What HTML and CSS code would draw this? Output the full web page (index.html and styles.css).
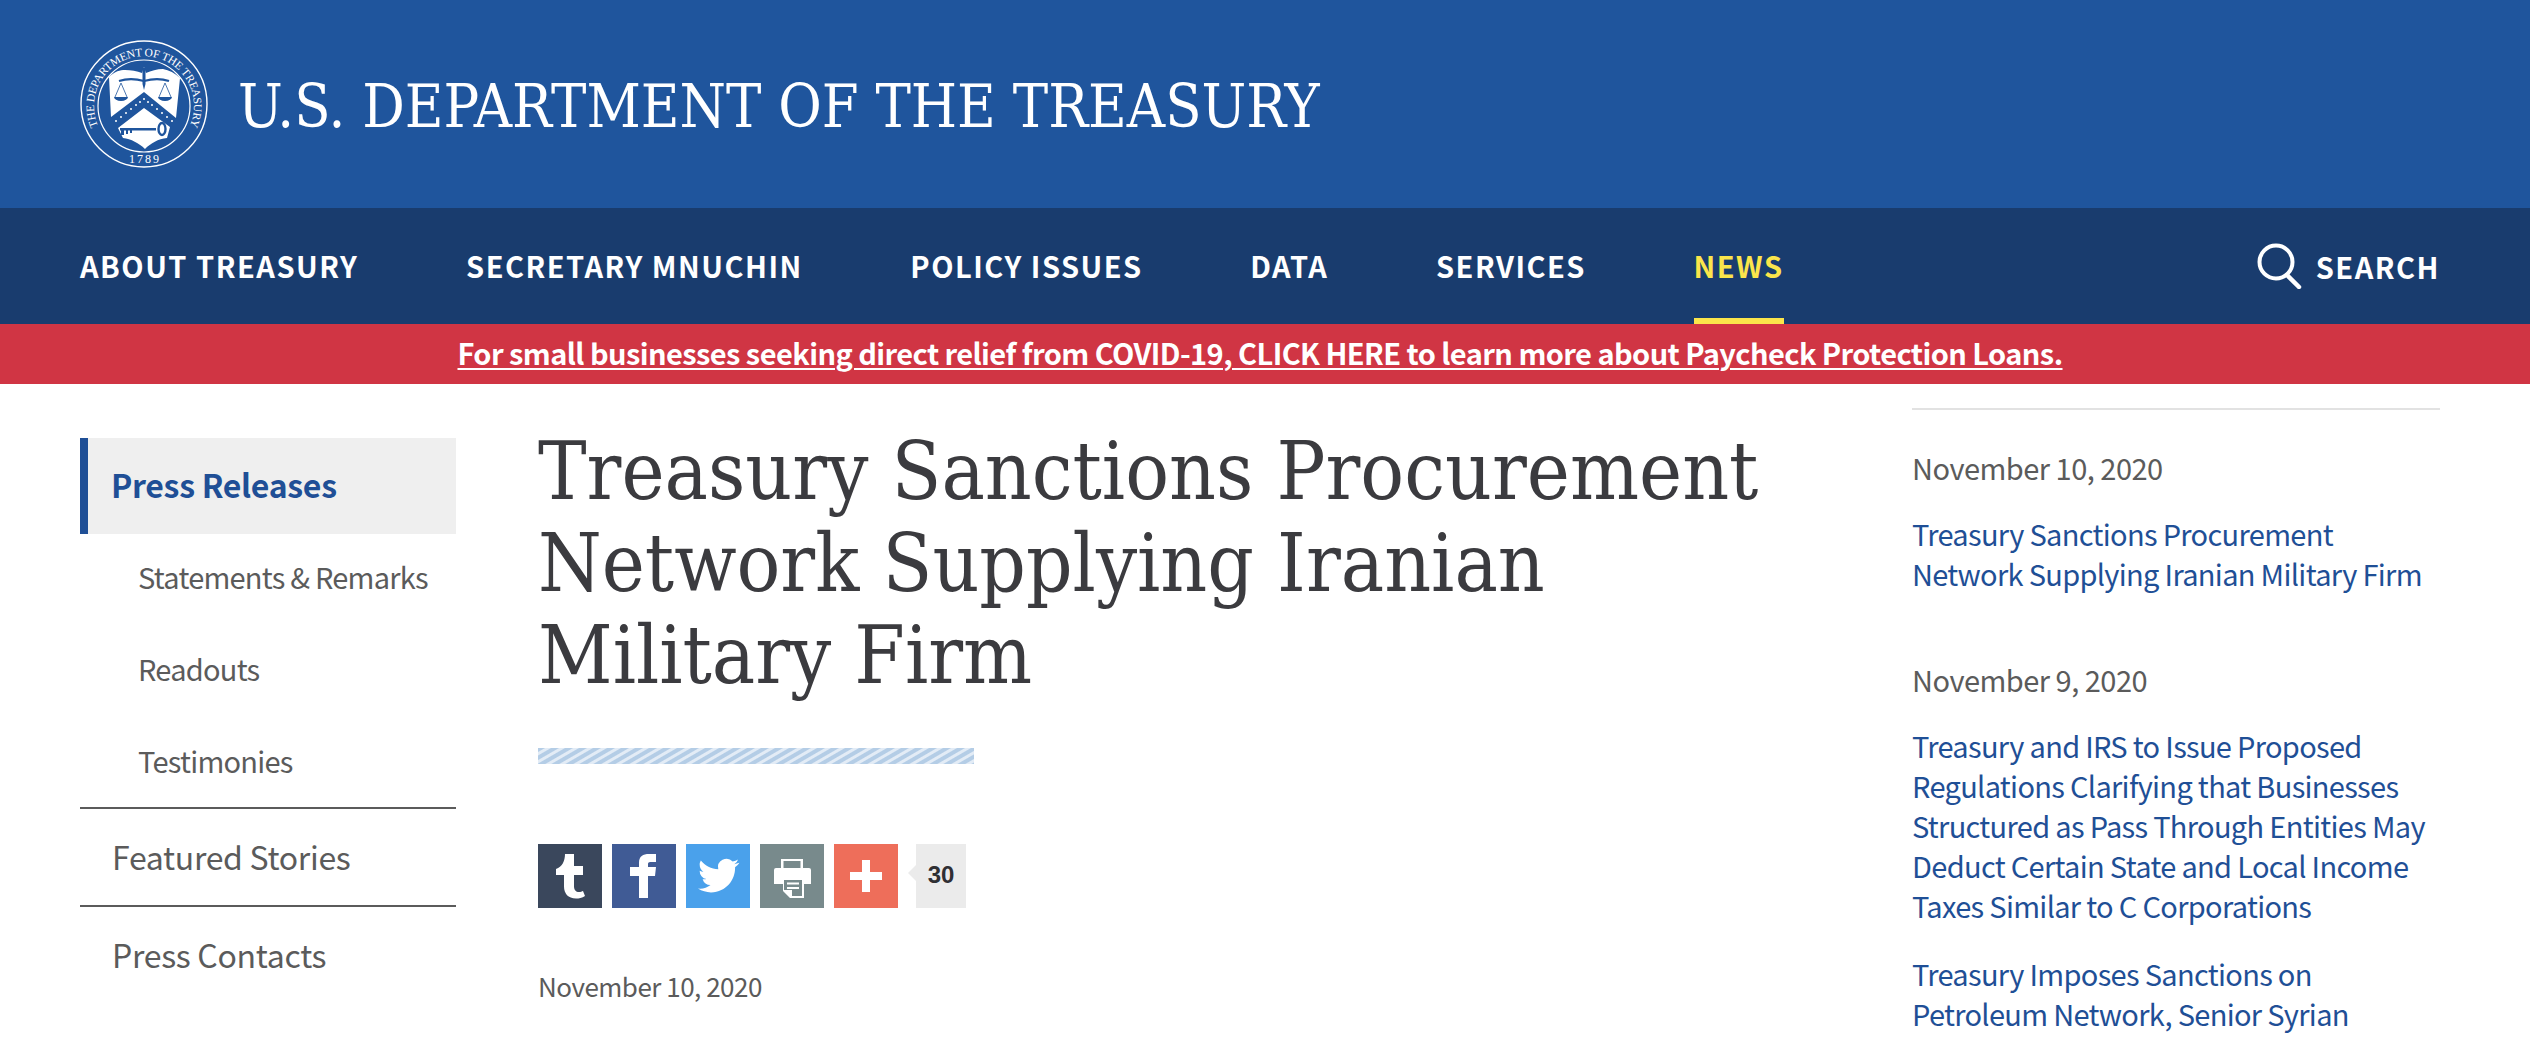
FILE: index.html
```html
<!DOCTYPE html>
<html lang="en">
<head>
<meta charset="utf-8">
<title>Treasury Sanctions Procurement Network Supplying Iranian Military Firm</title>
<link rel="stylesheet" href="styles.css">
</head>
<body>
<header class="masthead">
  <svg class="seal" viewBox="0 0 128 128" aria-hidden="true">
    <circle cx="64" cy="64" r="63" fill="none" stroke="#fff" stroke-width="1.400"/>
    <circle cx="64" cy="66" r="46" fill="none" stroke="#fff" stroke-width="1.200"/>
    <defs><path id="sealArc" d="M20 90 A50 50 0 1 1 108 90"/></defs>
    <text class="seal-ring"><textPath href="#sealArc" startOffset="50%" text-anchor="middle">THE DEPARTMENT OF THE TREASURY</textPath></text>
    <text class="seal-year" x="65" y="123" text-anchor="middle">1789</text>
    <path fill="#fff" d="M29 37 C35 31 40 30 45 30 C51 30 57 31 62 33 L64 27 L66 33 C71 31 77 29 83 29 C89 30 95 33 100 38 L96 78 L64 52 L31 77 Z"/>
    <path fill="#fff" d="M64 68 L90 87 L87 98 C78 99 71 103 65 109 C59 103 51 99 43 98 L38 88 Z"/>
    <path fill="none" stroke="#1f559d" stroke-width="2.200" d="M39 41 C48 38 57 39 64 41 C71 39 80 38 89 41"/>
    <path fill="#1f559d" d="M62.500 28 h3 v16 l-1.500 6 l-1.500 -6 z"/>
    <path fill="none" stroke="#1f559d" stroke-width="0.800" d="M41 43 L35 57 M41 43 L47 57 M85 43 L79 57 M85 43 L91 57"/>
    <path fill="#1f559d" d="M34 57 h14 a7 4 0 0 1 -14 0 Z M78 57 h14 a7 4 0 0 1 -14 0 Z"/>
    <path fill="#1f559d" d="M40 88 h36 v2.500 h-36 z M41 88 h3 v7 h-3 z M46 90 h2 v4 h-2 z M50 90 h2 v3 h-2 z"/>
    <ellipse cx="82" cy="89" rx="3.500" ry="6" fill="none" stroke="#1f559d" stroke-width="2.400"/>
    <g fill="#fff"><circle cx="36" cy="81" r="1"/><circle cx="41" cy="77" r="1"/><circle cx="46" cy="73" r="1"/><circle cx="51" cy="69" r="1"/><circle cx="56" cy="65" r="1"/><circle cx="60" cy="62" r="1"/><circle cx="64" cy="59" r="1"/><circle cx="68" cy="62" r="1"/><circle cx="72" cy="65" r="1"/><circle cx="77" cy="69" r="1"/><circle cx="82" cy="73" r="1"/><circle cx="87" cy="77" r="1"/><circle cx="92" cy="81" r="1"/></g>
  </svg>
  <div class="site-name">U.S. DEPARTMENT OF THE TREASURY</div>
</header>
<nav class="mainnav">
  <ul class="navlist">
    <li class="navitem">ABOUT TREASURY</li>
    <li class="navitem">SECRETARY MNUCHIN</li>
    <li class="navitem">POLICY ISSUES</li>
    <li class="navitem">DATA</li>
    <li class="navitem">SERVICES</li>
    <li class="navitem navitem-active">NEWS</li>
  </ul>
  <div class="search">
    <svg class="search-icon" viewBox="0 0 45 46" aria-hidden="true"><circle cx="19" cy="19" r="16.500" fill="none" stroke="#fff" stroke-width="4"/><path d="M30 32 L42 44" stroke="#fff" stroke-width="4.500" stroke-linecap="round"/></svg>
    <span>SEARCH</span>
  </div>
</nav>
<div class="alert"><a href="#">For small businesses seeking direct relief from COVID-19, CLICK HERE to learn more about Paycheck Protection Loans.</a></div>
<div class="content">
  <aside class="sidenav">
    <div class="side-current">Press Releases</div>
    <div class="side-sub">Statements &amp; Remarks</div>
    <div class="side-sub">Readouts</div>
    <div class="side-sub side-sub-last">Testimonies</div>
    <div class="side-top">Featured Stories</div>
    <div class="side-top">Press Contacts</div>
  </aside>
  <main class="article">
    <h1 class="title">Treasury Sanctions Procurement Network Supplying Iranian Military Firm</h1>
    <div class="stripes"></div>
    <div class="share">
      <span class="sq sq-tumblr"><svg viewBox="0 0 64 64"><path fill="#fff" d="M27 10 h9 v12 h9 v9 h-9 v11 c0 4 2 6 5 6 c1.500 0 3 -.5 4 -1 l2 5 c-3 2 -6 2.500 -9 2.500 c-8 0 -12 -5 -12 -12 v-11.500 h-8 v-6 c6 -2 9 -8 9 -15 z"/></svg></span>
      <span class="sq sq-fb"><svg viewBox="0 0 64 64"><path fill="#fff" d="M27 54 V32 H18 V23 H27 V19 C27 12 31 10 37 10 H44 V18 H39 C36 18 36 19 36 21 V23 H44 L43 32 H36 V54 Z"/></svg></span>
      <span class="sq sq-tw"><svg viewBox="0 0 64 64"><g transform="translate(12 11) scale(1.72)"><path fill="#fff" d="M23.950 4.570a10 10 0 0 1-2.820.770 4.960 4.960 0 0 0 2.160-2.720c-.950.550-2 .950-3.130 1.180a4.920 4.920 0 0 0-8.380 4.480C7.690 8.090 4.070 6.130 1.640 3.160a4.820 4.820 0 0 0-.660 2.470c0 1.710.870 3.210 2.190 4.100a4.900 4.900 0 0 1-2.230-.620v.060a4.920 4.920 0 0 0 3.950 4.830 4.900 4.900 0 0 1-2.210.080 4.940 4.940 0 0 0 4.600 3.420A9.870 9.870 0 0 1 0 19.540a14 14 0 0 0 7.560 2.210c9.050 0 14-7.500 14-13.980 0-.210 0-.420-.020-.630a9.940 9.940 0 0 0 2.460-2.550z"/></g></svg></span>
      <span class="sq sq-print"><svg viewBox="0 0 64 64"><path fill="#fff" fill-rule="evenodd" d="M21 15 h22 v9 h6 a2 2 0 0 1 2 2 v14 h-7 v14 H30 l-7 -7 v-7 h-9 V26 a2 2 0 0 1 2 -2 h5 Z M23.500 17 v7 h17 v-7 Z M24 36 h18 v16 H32 v-6 h-8 Z M27 38.500 h12 v2 h-12 Z M27 43 h12 v2 h-12 Z"/></svg></span>
      <span class="sq sq-plus"><svg viewBox="0 0 64 64"><path fill="#fff" d="M28 16 h8 v12 h12 v8 h-12 v12 h-8 v-12 h-12 v-8 h12 z"/></svg></span>
      <span class="count">30</span>
    </div>
    <div class="pubdate">November 10, 2020</div>
  </main>
  <aside class="recent">
    <div class="recent-date">November 10, 2020</div>
    <a class="recent-link" href="#">Treasury Sanctions Procurement Network Supplying Iranian Military Firm</a>
    <div class="recent-date recent-date-next">November 9, 2020</div>
    <a class="recent-link" href="#">Treasury and IRS to Issue Proposed Regulations Clarifying that Businesses Structured as Pass Through Entities May Deduct Certain State and Local Income Taxes Similar to C Corporations</a>
    <a class="recent-link" href="#">Treasury Imposes Sanctions on Petroleum Network, Senior Syrian</a>
  </aside>
</div>
</body>
</html>
```
FILE: styles.css
```css
* { box-sizing: border-box; }
html, body { margin: 0; height: 1040px; overflow: hidden; }
body { background: #fff; color: #5b5b5b; font-family: "Noto Sans CJK SC", "Noto Sans", sans-serif; font-size: 29px; letter-spacing: -0.5px; line-height: 40px; }
ul { margin: 0; padding: 0; list-style: none; }

.masthead { height: 208px; background: #1f559d; display: flex; align-items: center; padding: 0 80px; gap: 30px; }
.seal { width: 128px; height: 128px; flex: none; }
.seal-ring { font-family: "Liberation Serif", serif; font-size: 11.500px; letter-spacing: -0.300px; fill: #fff; }
.seal-year { font-family: "Liberation Serif", serif; font-size: 12px; letter-spacing: 2px; fill: #fff; }
.site-name { font-family: "DejaVu Serif Condensed", "DejaVu Serif", serif; font-weight: 400; font-size: 59px; letter-spacing: 0; line-height: 70px; color: #fff; white-space: nowrap; margin-top: 6px; }

.mainnav { height: 116px; background: #193c6e; display: flex; justify-content: space-between; padding: 0 90px 0 80px; }
.navlist { display: flex; gap: 107.600px; }
.navitem { height: 116px; line-height: 115px; font-size: 29px; font-weight: 700; letter-spacing: 1.500px; color: #fff; white-space: nowrap; }
.navitem-active { color: #fbe54b; border-bottom: 6px solid #fbe54b; }
.search { display: flex; align-items: center; gap: 14px; font-size: 29px; font-weight: 700; letter-spacing: 1.500px; color: #fff; }
.search-icon { width: 45px; height: 46px; }

.alert { height: 60px; background: #d03544; text-align: center; line-height: 56px; font-size: 29px; font-weight: 700; letter-spacing: -0.570px; padding-right: 10px; }
.alert a { color: #fff; text-decoration: underline; text-decoration-thickness: 2px; text-underline-offset: 3px; }

.content { display: flex; padding: 0 90px 0 80px; align-items: flex-start; }
.sidenav { width: 376px; flex: none; margin-top: 54px; }
.side-current { height: 96px; line-height: 93px; background: #efefef; border-left: 8px solid #1f4f96; padding-left: 23px; font-weight: 700; font-size: 32px; letter-spacing: -0.300px; color: #1f4f96; }
.side-sub { height: 92px; line-height: 85px; padding-left: 58px; letter-spacing: -0.750px; }
.side-sub-last { height: 91px; border-bottom: 2px solid #5b5b5b; }
.side-top { height: 98px; line-height: 95px; padding-left: 32px; font-size: 32px; letter-spacing: -0.300px; }
.side-top:nth-child(5) { border-bottom: 2px solid #5b5b5b; }

.article { width: 1456px; flex: none; padding-left: 82px; padding-right: 100px; }
.title { margin: 41px 0 0; font-family: "DejaVu Serif Condensed", "DejaVu Serif", serif; font-weight: 400; font-size: 81px; letter-spacing: 0; line-height: 92px; color: #3b3b3f; }
.stripes { width: 436px; height: 16px; margin-top: 47px; background: repeating-linear-gradient(150deg, #b4cde6 0, #b4cde6 3px, #e3ecf6 4px, #e3ecf6 6px, #b4cde6 7px); }
.share { display: flex; gap: 10px; margin-top: 80px; align-items: flex-start; }
.sq { width: 64px; height: 64px; display: block; flex: none; }
.sq svg { display: block; width: 64px; height: 64px; }
.sq-tumblr { background: #3a475c; }
.sq-fb { background: #405b95; }
.sq-tw { background: #4aa1eb; }
.sq-print { background: #788a8c; }
.sq-plus { background: #ee6e5a; }
.count { position: relative; width: 50px; height: 64px; margin-left: 8px; background: #ebebeb; color: #2f2f33; font-family: "Liberation Sans", sans-serif; font-weight: 700; font-size: 24px; letter-spacing: 0; line-height: 62px; text-align: center; }
.count::before { content: ""; position: absolute; left: -8px; top: 21px; border: 8px solid transparent; border-left: 0; border-right-color: #ebebeb; }
.pubdate { margin-top: 58px; font-size: 26px; letter-spacing: -0.500px; }

.recent { width: 528px; flex: none; margin-top: 24px; border-top: 2px solid #e2e2e2; padding-top: 37px; }
.recent-date { height: 40px; margin-bottom: 26px; }
.recent-date-next { margin-top: 66px; }
.recent-link { display: block; color: #1f4f96; text-decoration: none; margin-bottom: 28px; letter-spacing: -0.680px; }
```
